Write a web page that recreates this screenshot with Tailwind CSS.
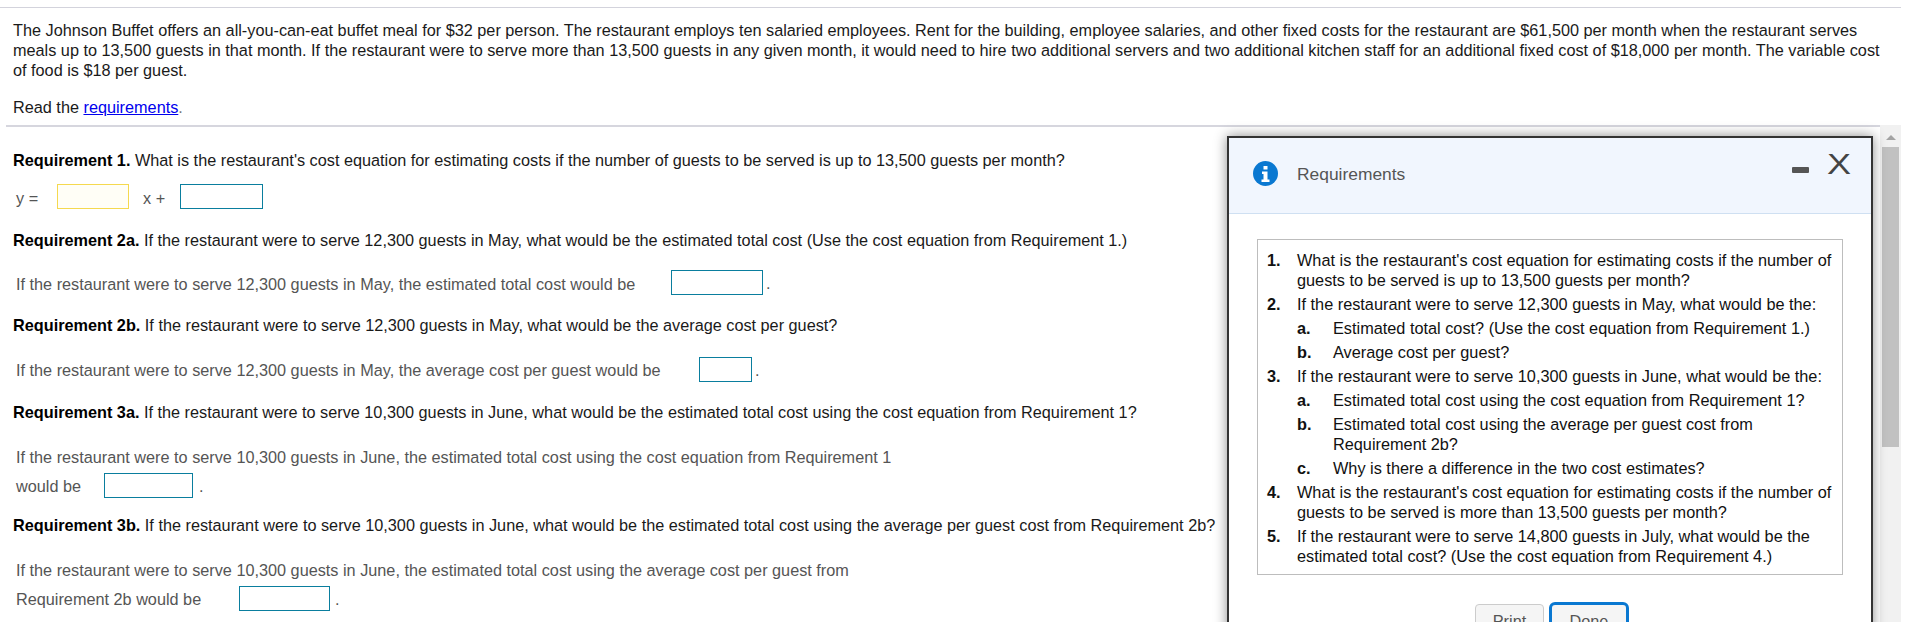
<!DOCTYPE html>
<html><head><meta charset="utf-8">
<script src="https://cdn.jsdelivr.net/npm/@tailwindcss/browser@4"></script>
</head>
<body class="bg-white overflow-hidden">
<div class="relative w-[1901px] h-[622px] overflow-hidden font-['Liberation_Sans',Arial,sans-serif] text-[16.26px] leading-[20px] text-[#1a1a1a]">
  <div class="h-[8px] border-b border-[#d3d3dc]"></div>
  <main class="pr-[21px]">
    <section class="pl-[13px] pt-[12px]">
      <p>The Johnson Buffet offers an all-you-can-eat buffet meal for $32 per person. The restaurant employs ten salaried employees. Rent for the building, employee salaries, and other fixed costs for the restaurant are $61,500 per month when the restaurant serves meals up to 13,500 guests in that month. If the restaurant were to serve more than 13,500 guests in any given month, it would need to hire two additional servers and two additional kitchen staff for an additional fixed cost of $18,000 per month. The variable cost of food is $18 per guest.</p>
      <p class="mt-[17px]">Read the <a class="text-[#0000ee] underline">requirements</a><span class="text-[#777]">.</span></p>
    </section>
    <div class="ml-[6px] mt-[8px] h-[2px] bg-[#d6d6de]"></div>
    <section class="pl-[13px] text-[#555]">
      <p class="mt-[23px] text-[#1a1a1a]"><b class="text-black">Requirement 1.</b> What is the restaurant's cost equation for estimating costs if the number of guests to be served is up to 13,500 guests per month?</p>
      <div class="mt-[14px] flex items-center h-[25px]">
        <span class="ml-[3px] w-[41px] pt-[2px]">y =</span>
        <div class="w-[72px] h-[25px] border border-[#f5d94f] bg-[#fffef6]"></div>
        <span class="ml-[14px] w-[37px] pt-[2px]">x +</span>
        <div class="w-[83px] h-[25px] border border-[#0a7e9e]"></div>
      </div>
      <p class="mt-[21px] text-[#1a1a1a]"><b class="text-black">Requirement 2a.</b> If the restaurant were to serve 12,300 guests in May, what would be the estimated total cost (Use the cost equation from Requirement 1.)</p>
      <div class="mt-[20px] flex items-center h-[25px] pl-[3px]">
        <span class="w-[655px] pt-[2px]">If the restaurant were to serve 12,300 guests in May, the estimated total cost would be</span>
        <div class="w-[92px] h-[25px] border border-[#0a7e9e]"></div><span class="ml-[3px]">.</span>
      </div>
      <p class="mt-[20px] text-[#1a1a1a]"><b class="text-black">Requirement 2b.</b> If the restaurant were to serve 12,300 guests in May, what would be the average cost per guest?</p>
      <div class="mt-[22px] flex items-center h-[25px] pl-[3px]">
        <span class="w-[683px]">If the restaurant were to serve 12,300 guests in May, the average cost per guest would be</span>
        <div class="w-[53px] h-[25px] border border-[#0a7e9e]"></div><span class="ml-[3px]">.</span>
      </div>
      <p class="mt-[20px] text-[#1a1a1a]"><b class="text-black">Requirement 3a.</b> If the restaurant were to serve 10,300 guests in June, what would be the estimated total cost using the cost equation from Requirement 1?</p>
      <p class="mt-[25px] pl-[3px]">If the restaurant were to serve 10,300 guests in June, the estimated total cost using the cost equation from Requirement 1</p>
      <div class="mt-[6px] flex items-center h-[25px] pl-[3px]">
        <span class="w-[88px]">would be</span>
        <div class="w-[89px] h-[25px] border border-[#0a7e9e]"></div><span class="ml-[6px]">.</span>
      </div>
      <p class="mt-[17px] text-[#1a1a1a] whitespace-nowrap"><b class="text-black">Requirement 3b.</b> If the restaurant were to serve 10,300 guests in June, what would be the estimated total cost using the average per guest cost from Requirement 2b?</p>
      <p class="mt-[25px] pl-[3px]">If the restaurant were to serve 10,300 guests in June, the estimated total cost using the average cost per guest from</p>
      <div class="mt-[6px] flex items-center h-[25px] pl-[3px]">
        <span class="w-[223px]">Requirement 2b would be</span>
        <div class="w-[91px] h-[25px] border border-[#0a7e9e]"></div><span class="ml-[5px]">.</span>
      </div>
    </section>
  </main>

  <aside class="absolute left-[1880px] top-[125px] w-[21px] h-[497px] bg-[#f1f1f1]">
    <div class="mx-auto mt-[10px] w-0 h-0 border-x-[5px] border-x-transparent border-b-[5px] border-b-[#a3a3a3]"></div>
    <div class="absolute left-[2px] top-[22px] w-[17px] h-[300px] bg-[#c1c1c1]"></div>
  </aside>

  <div class="absolute left-[1227px] top-[136px] w-[646px] h-[520px] border-[2px] border-[#333] bg-white shadow-[0_0_12px_rgba(0,0,0,0.45)]">
    <header class="h-[76px] bg-[#f1f6fe] border-b border-[#cfe0f2] flex items-center pl-[24px] pb-[4px] relative">
      <svg class="w-[25px] h-[25px] shrink-0" viewBox="0 0 25 25"><circle cx="12.5" cy="12.5" r="12.5" fill="#0a78d1"/><path fill="#fff" d="M10.500 5h4v3.500h-4zM9 10.500h5.500v8H16.500v2.500H8.500v-2.500h2v-5.500H9z"/></svg>
      <span class="ml-[19px] text-[#555] text-[17.4px]">Requirements</span>
      <div class="absolute left-[563px] top-[29px] w-[17px] h-[6px] bg-[#555] rounded-[1px]"></div>
      <span class="absolute left-[600px] top-[8px] text-[#444] text-[30px] leading-[36px] scale-x-120">X</span>
    </header>
    <div class="ml-[28px] mt-[25px] w-[586px] h-[336px] border border-[#bdbdbd] pl-[9px] pr-[7px] pt-[10px] text-[#111] text-[16.3px]">
      <ol>
        <li class="flex"><b class="w-[30px] shrink-0">1.</b><span>What is the restaurant's cost equation for estimating costs if the number of guests to be served is up to 13,500 guests per month?</span></li>
        <li class="flex mt-[4px]"><b class="w-[30px] shrink-0">2.</b><span>If the restaurant were to serve 12,300 guests in May, what would be the:</span></li>
        <li class="flex mt-[4px] pl-[30px]"><b class="w-[36px] shrink-0">a.</b><span>Estimated total cost? (Use the cost equation from Requirement 1.)</span></li>
        <li class="flex mt-[4px] pl-[30px]"><b class="w-[36px] shrink-0">b.</b><span>Average cost per guest?</span></li>
        <li class="flex mt-[4px]"><b class="w-[30px] shrink-0">3.</b><span>If the restaurant were to serve 10,300 guests in June, what would be the:</span></li>
        <li class="flex mt-[4px] pl-[30px]"><b class="w-[36px] shrink-0">a.</b><span>Estimated total cost using the cost equation from Requirement 1?</span></li>
        <li class="flex mt-[4px] pl-[30px]"><b class="w-[36px] shrink-0">b.</b><span>Estimated total cost using the average per guest cost from<br>Requirement 2b?</span></li>
        <li class="flex mt-[4px] pl-[30px]"><b class="w-[36px] shrink-0">c.</b><span>Why is there a difference in the two cost estimates?</span></li>
        <li class="flex mt-[4px]"><b class="w-[30px] shrink-0">4.</b><span>What is the restaurant's cost equation for estimating costs if the number of guests to be served is more than 13,500 guests per month?</span></li>
        <li class="flex mt-[4px]"><b class="w-[30px] shrink-0">5.</b><span>If the restaurant were to serve 14,800 guests in July, what would be the estimated total cost? (Use the cost equation from Requirement 4.)</span></li>
      </ol>
    </div>
    <div class="flex ml-[246px] mt-[27px] gap-[5px] items-start">
      <button class="mt-[2px] w-[69px] h-[34px] border border-[#ccc] rounded-[4px] bg-[#f5f5f5] text-[#555]">Print</button>
      <button class="w-[80px] h-[38px] border-[3px] border-[#0a78d1] rounded-[6px] bg-[#f5f5f5] text-[#555]">Done</button>
    </div>
  </div>
</div>
</body></html>
